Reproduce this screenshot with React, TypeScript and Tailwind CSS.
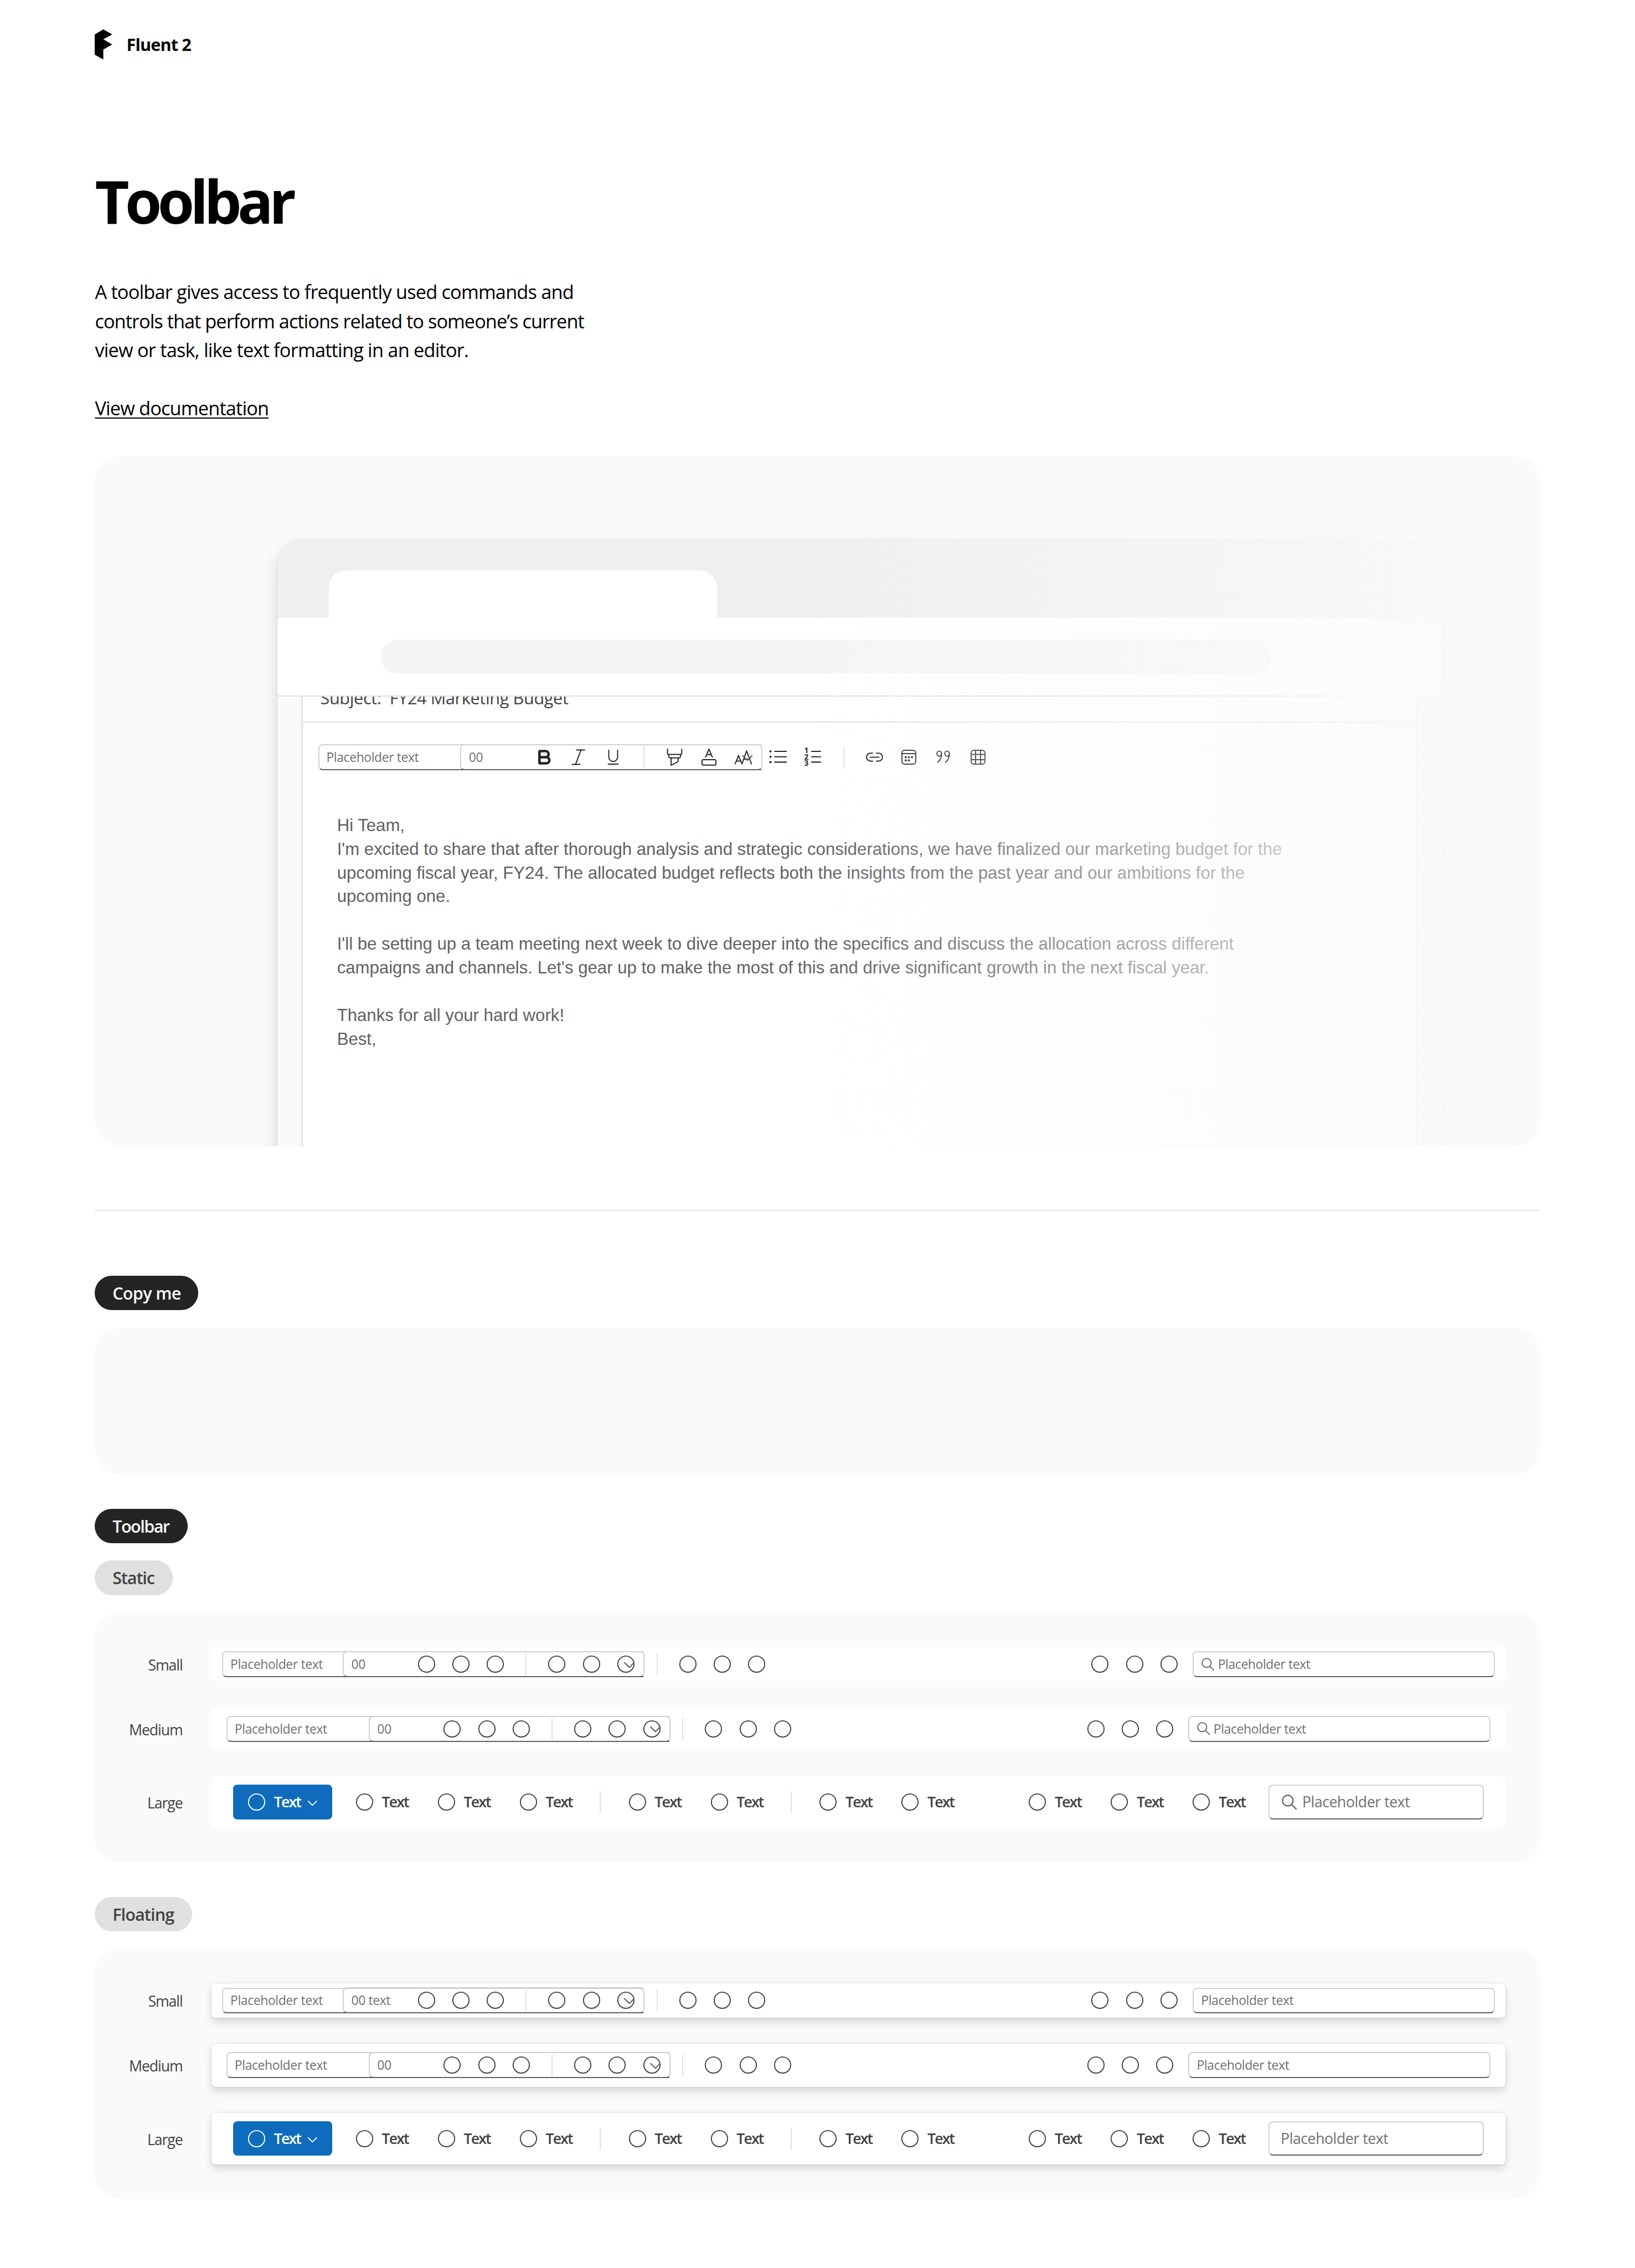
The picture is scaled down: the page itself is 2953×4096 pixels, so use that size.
import type { ReactNode } from "react";
import { Bold, Italic } from "lucide-react";

/* ---------- Icons ---------- */

function Glyph({ children, className = "size-5" }: { children: ReactNode; className?: string }) {
  return (
    <svg
      viewBox="0 0 20 20"
      fill="none"
      stroke="currentColor"
      strokeWidth="1"
      strokeLinecap="round"
      strokeLinejoin="round"
      className={`${className} shrink-0 overflow-visible`}
    >
      {children}
    </svg>
  );
}

const CircleIcon = () => (
  <Glyph>
    <circle cx="10" cy="10" r="7.5" />
  </Glyph>
);

const SearchIcon = ({ className }: { className: string }) => (
  <svg viewBox="0 0 12 12" fill="none" stroke="currentColor" strokeLinecap="round" className={`${className} shrink-0`}>
    <circle cx="4.8" cy="4.8" r="4.2" strokeWidth="0.95" />
    <path d="M7.9 7.9 11.5 11.5" strokeWidth="0.95" />
  </svg>
);

const ChevronIcon = ({ className }: { className: string }) => (
  <svg viewBox="0 0 12 12" fill="none" stroke="currentColor" strokeLinecap="round" strokeLinejoin="round" className={`${className} shrink-0`}>
    <path d="M1.6 4 6 8.4 10.4 4" strokeWidth="1.1" />
  </svg>
);

const UnderlineIcon = () => (
  <Glyph>
    <path d="M5.9 3.5v6.4a4.1 4.1 0 0 0 8.2 0V3.5M5.4 16.4h9.2" />
  </Glyph>
);

const HighlighterIcon = () => (
  <Glyph>
    <path d="M3.4 2.4v4a1 1 0 0 0 1 1h11.2a1 1 0 0 0 1-1v-4M4.5 7.4v1.3c0 1.2.8 2 2 2h7c1.2 0 2-.8 2-2V7.4M6.7 10.7v6.8l5.7-3c.6-.3.9-.8.9-1.4v-2.4" />
  </Glyph>
);

const FontColorIcon = () => (
  <Glyph>
    <path d="M6.9 10 10 2.5l3.1 7.5M7.9 7.6h4.2" />
    <rect x="3.5" y="12.3" width="13" height="5" rx="1.3" />
  </Glyph>
);

const FontSizeIcon = () => (
  <Glyph>
    <path d="M2.4 16.2 5.6 8.4l3.2 7.8M3.5 13.6h4.2M8.8 16.2 13.1 4.1l4.5 12.1M10.4 11.8h5.5" />
  </Glyph>
);

const BulletListIcon = () => (
  <Glyph>
    <path d="M6.8 4.6h10.8M6.8 9.6h10.8M6.8 14.6h10.8" strokeWidth="1.1" />
    <g fill="currentColor" stroke="none">
      <circle cx="2.9" cy="4.6" r="1" />
      <circle cx="2.9" cy="9.6" r="1" />
      <circle cx="2.9" cy="14.6" r="1" />
    </g>
  </Glyph>
);

const NumberListIcon = () => (
  <Glyph>
    <path d="M8.7 4.6h8.2M8.7 9.6h8.2M8.7 14.6h8.2" strokeWidth="1.1" />
    <g fill="currentColor" stroke="none" className="font-['Open_Sans'] text-[7px] font-bold">
      <text x="1.8" y="6.2">1</text>
      <text x="1.8" y="12.1">2</text>
      <text x="1.8" y="18.1">3</text>
    </g>
  </Glyph>
);

const LinkIcon = () => (
  <Glyph>
    <path d="M8.2 6.3H6.3a3.7 3.7 0 0 0 0 7.4h1.9M11.8 6.3h1.9a3.7 3.7 0 0 1 0 7.4h-1.9M6.2 10h8" strokeWidth="1.1" />
  </Glyph>
);

const CalendarIcon = () => (
  <Glyph>
    <rect x="3.6" y="3.6" width="12.8" height="12.8" rx="2.4" />
    <path d="M3.6 6.7h12.8" />
    <g fill="currentColor" stroke="none">
      <circle cx="7.1" cy="10" r="1" />
      <circle cx="10" cy="10" r="1" />
      <circle cx="12.9" cy="10" r="1" />
      <circle cx="7.1" cy="13" r="1" />
      <circle cx="10" cy="13" r="1" />
    </g>
  </Glyph>
);

const QuoteIcon = () => (
  <Glyph>
    <ellipse cx="6.3" cy="6.7" rx="2.1" ry="2.4" />
    <path d="M8.4 6.7c.2 3-1 6-3.4 8" />
    <ellipse cx="13.6" cy="6.7" rx="2.1" ry="2.4" />
    <path d="M15.7 6.7c.2 3-1 6-3.4 8" />
  </Glyph>
);

const TableIcon = () => (
  <Glyph>
    <rect x="3.6" y="3.6" width="12.8" height="12.8" rx="2.4" />
    <path d="M7.7 3.6v12.8M12.3 3.6v12.8M3.6 7.4h12.8M3.6 12.3h12.8" />
  </Glyph>
);

/* ---------- Toolbar parts ---------- */

const IconSlot = ({ children }: { children: ReactNode }) => (
  <div className="flex h-6 w-8 shrink-0 items-center justify-center">{children}</div>
);

const Separator = () => (
  <div className="flex w-[25px] shrink-0 justify-center">
    <div className="h-5 w-px bg-[#e0e0e0]" />
  </div>
);

const CircleGroup = () => (
  <div className="flex">
    <IconSlot><CircleIcon /></IconSlot>
    <IconSlot><CircleIcon /></IconSlot>
    <IconSlot><CircleIcon /></IconSlot>
  </div>
);

function ComboGroup({ wide = false, size = "00", first, second }: { wide?: boolean; size?: string; first: ReactNode; second: ReactNode }) {
  return (
    <div className="relative flex h-6 shrink-0 rounded-[4px] border-[1.1px] border-[#d1d1d1] border-b-[#616161] bg-white">
      <div
        className={`${wide ? "w-[130.7px]" : "w-[110.7px]"} flex shrink-0 items-center pl-[6.6px] text-[11.8px] leading-4 tracking-[-0.018em] text-[#707070]`}
      >
        Placeholder text
      </div>
      <div className="-my-[1.1px] flex w-[279px] items-center rounded-l-[4px] border-y-[1.1px] border-l-[1.1px] border-[#d1d1d1] border-b-[#616161]">
        <div className="w-[60.7px] shrink-0 pl-[7px] text-[11.8px] leading-4 tracking-[-0.018em] text-[#707070]">{size}</div>
        <div className="flex shrink-0">{first}</div>
        <Separator />
        <div className="-mr-2 flex shrink-0">{second}</div>
      </div>
      <ChevronIcon className="absolute top-[5.5px] right-[7px] size-3 text-[#616161]" />
    </div>
  );
}

function Field({ icon, large = false }: { icon: boolean; large?: boolean }) {
  return large ? (
    <div className="flex h-8 w-[200px] items-center rounded-[4px] border-[1.1px] border-[#d1d1d1] border-b-[#616161] bg-white pl-[10.5px] text-[#707070]">
      {icon && <SearchIcon className="mr-[5px] ml-[1px] size-[14px] text-[#616161]" />}
      <span className="text-[13.7px] leading-5 tracking-[-0.017em]">Placeholder text</span>
    </div>
  ) : (
    <div className="flex h-6 w-[280px] items-center rounded-[4px] border-[1.1px] border-[#d1d1d1] border-b-[#616161] bg-white pl-[6.7px] text-[#707070]">
      {icon && <SearchIcon className="mr-[3.2px] ml-[0.4px] size-3 text-[#616161]" />}
      <span className="text-[11.8px] leading-4 tracking-[-0.018em]">Placeholder text</span>
    </div>
  );
}

const TextButton = () => (
  <div className="flex h-8 w-[76px] shrink-0 items-center gap-1.5 pl-3 text-[#424242]">
    <CircleIcon />
    <span className="text-[13.7px] leading-5 font-semibold tracking-[-0.07em]">Text</span>
  </div>
);

const PrimaryButton = () => (
  <div className="mr-2 flex h-8 w-[92px] shrink-0 items-center rounded-[4px] bg-[#0f6cbd] pl-3 text-white">
    <CircleIcon />
    <span className="ml-1.5 text-[13.7px] leading-5 font-semibold tracking-[-0.07em]">Text</span>
    <ChevronIcon className="mt-0.5 ml-[5.5px] size-[10.5px]" />
  </div>
);

function Row({ label, bar, floating, children }: { label: string; bar: string; floating: boolean; children: ReactNode }) {
  return (
    <div className="flex items-center">
      <div className="w-[81.2px] shrink-0 pt-[2px] text-right text-[13.7px] leading-5 tracking-[-0.041em] text-[#424242]">{label}</div>
      <div
        className={`ml-[26.8px] flex w-[1200px] shrink-0 items-center justify-between rounded-[4px] bg-white text-[#424242] ${bar} ${
          floating ? "shadow-[0_0_2px_rgba(0,0,0,0.12),0_4px_8px_rgba(0,0,0,0.14)]" : ""
        }`}
      >
        {children}
      </div>
    </div>
  );
}

function ToolbarPanel({ floating = false }: { floating?: boolean }) {
  return (
    <div className="mt-4 flex flex-col gap-6 rounded-[24px] bg-[#fafafa] py-8">
      <Row label="Small" bar="h-8 px-2.5" floating={floating}>
        <div className="flex items-center">
          <ComboGroup size={floating ? "00 text" : "00"} first={<CircleGroup />} second={<CircleGroup />} />
          <div className="-ml-px"><Separator /></div>
          <CircleGroup />
        </div>
        <div className="flex items-center gap-1.5">
          <CircleGroup />
          <Field icon={!floating} />
        </div>
      </Row>
      <Row label="Medium" bar="h-10 px-3.5" floating={floating}>
        <div className="flex items-center">
          <ComboGroup wide first={<CircleGroup />} second={<CircleGroup />} />
          <div className="-ml-px"><Separator /></div>
          <CircleGroup />
        </div>
        <div className="flex items-center gap-1.5">
          <CircleGroup />
          <Field icon={!floating} />
        </div>
      </Row>
      <Row label="Large" bar="h-12 px-5" floating={floating}>
        <div className="flex items-center">
          <PrimaryButton />
          <TextButton />
          <TextButton />
          <TextButton />
          <Separator />
          <TextButton />
          <TextButton />
          <Separator />
          <TextButton />
          <TextButton />
        </div>
        <div className="flex items-center">
          <div className="mr-2 flex">
            <TextButton />
            <TextButton />
            <TextButton />
          </div>
          <Field icon={!floating} large />
        </div>
      </Row>
    </div>
  );
}

/* ---------- Hero ---------- */

function Hero() {
  return (
    <div className="relative mt-[30px] h-[640px] overflow-hidden rounded-[24px] bg-[#fafafa]">
      <div className="mt-[77.5px] ml-[169px] h-[700px] w-[1080px] overflow-hidden rounded-t-[24px] bg-[#fafafa] shadow-[0_0_2px_rgba(0,0,0,0.12),0_8px_16px_rgba(0,0,0,0.14)]">
        <div className="flex h-[72.5px] items-end bg-[#efefef] pl-12">
          <div className="h-11 w-[360px] rounded-t-[16px] bg-white" />
        </div>
        <div className="relative z-10 flex h-[73px] border-b-[1.1px] border-[#e0e0e0] bg-white pt-5 pl-24">
          <div className="h-8 w-[826px] rounded-full bg-[#f5f5f5]" />
        </div>
        <div className="mx-6 -mt-5 h-[600px] bg-white pt-5 shadow-[0_0_2px_rgba(0,0,0,0.12),0_2px_4px_rgba(0,0,0,0.14)]">
          <div className="flow-root h-6 border-b-[1.1px] border-[#e0e0e0] pl-4">
            <div className="-mt-[10px] text-[15.7px] leading-[22px] tracking-[-0.011em] whitespace-pre text-[#424242]">
              {"Subject:  FY24 Marketing Budget"}
            </div>
          </div>
          <div className="mt-3 flex h-10 items-center pl-3.5 text-[#242424]">
            <ComboGroup
              wide
              first={
                <>
                  <IconSlot><Bold size={17} strokeWidth={3.3} /></IconSlot>
                  <IconSlot><Italic size={20} strokeWidth={1.2} /></IconSlot>
                  <IconSlot><UnderlineIcon /></IconSlot>
                </>
              }
              second={
                <>
                  <IconSlot><HighlighterIcon /></IconSlot>
                  <IconSlot><FontColorIcon /></IconSlot>
                  <IconSlot><FontSizeIcon /></IconSlot>
                </>
              }
            />
            <div className="-ml-px flex items-center">
              <IconSlot><BulletListIcon /></IconSlot>
              <IconSlot><NumberListIcon /></IconSlot>
              <Separator />
              <IconSlot><LinkIcon /></IconSlot>
              <IconSlot><CalendarIcon /></IconSlot>
              <IconSlot><QuoteIcon /></IconSlot>
              <IconSlot><TableIcon /></IconSlot>
            </div>
          </div>
          <div className="mt-[32.7px] pl-[31.5px] font-['Liberation_Sans',Arial,sans-serif] text-[16px] leading-[22px] whitespace-pre text-[#616161]">
            <p>Hi Team,</p>
            <p>I'm excited to share that after thorough analysis and strategic considerations, we have finalized our marketing budget for the</p>
            <p>upcoming fiscal year, FY24. The allocated budget reflects both the insights from the past year and our ambitions for the</p>
            <p>upcoming one.</p>
            <p className="mt-[22px]">I'll be setting up a team meeting next week to dive deeper into the specifics and discuss the allocation across different</p>
            <p>campaigns and channels. Let's gear up to make the most of this and drive significant growth in the next fiscal year.</p>
            <p className="mt-[22px]">Thanks for all your hard work!</p>
            <p>Best,</p>
          </div>
        </div>
      </div>
      <div className="absolute inset-0 z-20 bg-[linear-gradient(90deg,rgba(250,250,250,0)_48.8%,#fafafa_100%)]" />
    </div>
  );
}

function Pill({ children, className }: { children: ReactNode; className: string }) {
  return (
    <div className={`flex h-8 items-center rounded-full pl-[16.3px] text-[15.7px] leading-[22px] font-semibold whitespace-nowrap ${className}`}>
      {children}
    </div>
  );
}

export default function App() {
  return (
    <main className="flex h-[2102.8px] w-full flex-col overflow-hidden bg-white px-[88px] font-['Open_Sans','Noto_Sans',sans-serif] text-black [zoom:1.9478]">
      <header className="mt-[27px] flex h-7 items-center">
        <svg viewBox="0 0 16.3 28" className="h-7 w-[16.3px]">
          <path d="M8 0 16.3 4.75 8 9.25 16.3 14 8 18.75V28L0 23.5V4.75Z" />
        </svg>
        <span className="mt-[1px] ml-[13px] text-[15.7px] leading-[22px] font-bold tracking-[-0.027em]">Fluent 2</span>
      </header>

      <h1 className="mt-[97.5px] text-[55px] leading-[68px] font-bold tracking-[-0.07em]">Toolbar</h1>
      <div className="mt-[36.7px] text-[17.64px] leading-[27px] whitespace-nowrap">
        <p className="tracking-[-0.024em]">A toolbar gives access to frequently used commands and</p>
        <p className="tracking-[-0.0285em]">controls that perform actions related to someone’s current</p>
        <p className="tracking-[-0.0235em]">view or task, like text formatting in an editor.</p>
        <p className="mt-[27px] tracking-[-0.025em]">
          <span className="underline decoration-[1px] underline-offset-[2px]">View documentation</span>
        </p>
      </div>

      <div className="-mt-[29.2px] pt-[30px]">
        <Hero />
      </div>
      <div className="mt-[59px] h-px shrink-0 bg-[#e6e6e6]" />

      <div className="mt-[60px] flex">
        <Pill className="w-24 bg-[#242424] tracking-[-0.022em] text-white">Copy me</Pill>
      </div>
      <div className="mt-4 h-[136px] rounded-[24px] bg-[#fafafa]" />

      <div className="mt-8 flex flex-col gap-4">
        <Pill className="w-[86px] bg-[#242424] tracking-[-0.05em] text-white">Toolbar</Pill>
        <Pill className="w-[72px] bg-[#e0e0e0] tracking-[-0.037em] text-[#424242]">Static</Pill>
      </div>
      <ToolbarPanel />

      <div className="mt-8 flex">
        <Pill className="w-[90px] bg-[#e0e0e0] tracking-[-0.029em] text-[#424242]">Floating</Pill>
      </div>
      <ToolbarPanel floating />
    </main>
  );
}
